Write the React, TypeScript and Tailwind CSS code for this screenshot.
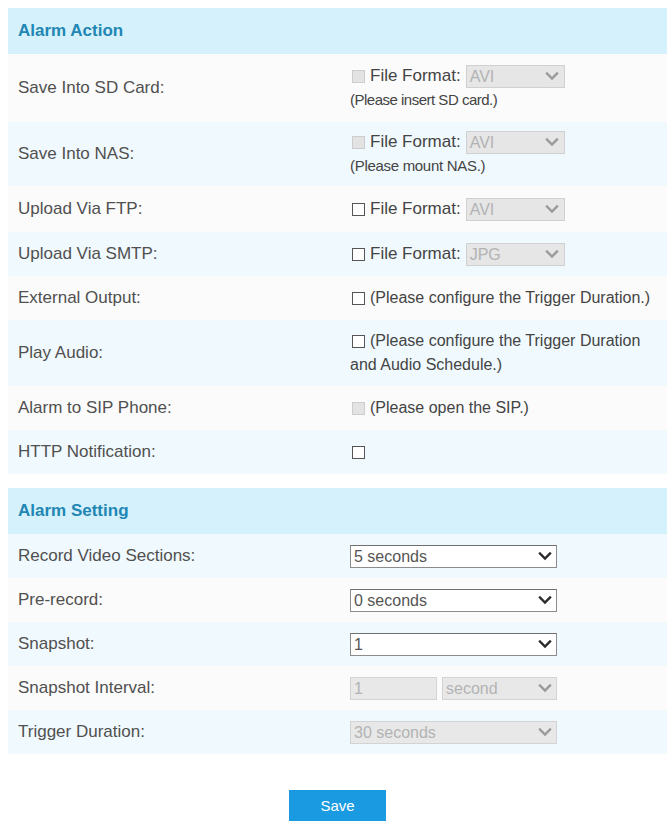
import React from 'react';

type Tone = 'white' | 'blue';

const rowTone: Record<Tone, string> = {
  white: 'bg-[#fbfbfb]',
  blue: 'bg-[#f0f9fd]',
};

function Chevron({ disabled = false }: { disabled?: boolean }) {
  return (
    <svg width="14" height="10" viewBox="0 0 14 10" className="shrink-0">
      <path
        d="M2 2.5 L7 7.5 L12 2.5"
        fill="none"
        stroke={disabled ? '#9a9a9a' : '#2b2b2b'}
        strokeWidth="2.4"
        strokeLinecap="square"
      />
    </svg>
  );
}

function Checkbox({ disabled = false }: { disabled?: boolean }) {
  return (
    <span
      className={
        disabled
          ? 'inline-block shrink-0 w-[13px] h-[13px] border border-[#cdcdcd] bg-[#e3e3e3]'
          : 'inline-block shrink-0 w-[13px] h-[13px] border border-[#555] bg-white'
      }
    />
  );
}

// small grey disabled select used for the file formats
function FormatSelect({ value }: { value: string }) {
  return (
    <span className="inline-flex items-center justify-between w-[99px] h-[23px] pl-[3px] pr-[5px] border border-[#d0d0d0] bg-[#e6e6e6] text-[#b3b3b3] text-[16px] leading-[21px]">
      <span>{value}</span>
      <Chevron disabled />
    </span>
  );
}

function WideSelect({ value, disabled = false, width = 'w-[207px]' }: { value: string; disabled?: boolean; width?: string }) {
  return (
    <div
      className={
        `${width} h-[23px] flex items-center justify-between pl-[3px] pr-[4px] border leading-[21px] ` +
        (disabled
          ? 'border-[#d3d3d3] bg-[#e8e8e8] text-[#b3b3b3]'
          : 'border-[#8c8c8c] border-t-[#6f6f6f] bg-white text-[#555]')
      }
    >
      <span>{value}</span>
      <Chevron disabled={disabled} />
    </div>
  );
}

function Row({ label, tone, pad = 'py-[10px]', children }: { label: string; tone: Tone; pad?: string; children: React.ReactNode }) {
  return (
    <div className={`flex items-center min-h-[44px] ${pad} ${rowTone[tone]}`}>
      <div className="w-[342px] shrink-0 pl-[10px] text-[#505050]">{label}</div>
      <div className="flex-1 text-[#444] text-[16px]">{children}</div>
    </div>
  );
}

function FileFormat({ value, disabled = false }: { value: string; disabled?: boolean }) {
  return (
    <div className="flex items-center gap-[5px] pl-[2px]">
      <Checkbox disabled={disabled} />
      <span className="text-[17px]">File Format:</span>
      <FormatSelect value={value} />
    </div>
  );
}

function Header({ title }: { title: string }) {
  return (
    <div className="h-[46px] flex items-center pl-[10px] bg-[#d5f1fb] font-bold text-[#2186b4]">{title}</div>
  );
}

export default function App() {
  return (
    <div className="min-h-[826px] bg-white px-[8px] pt-[8px] font-['Liberation_Sans',Arial,sans-serif] text-[17px] leading-[24px]">
      <div className="w-[659px]">
        <Header title="Alarm Action" />
        <Row label="Save Into SD Card:" tone="white" pad="py-[10px]">
          <FileFormat value="AVI" disabled />
          <div className="text-[15px] tracking-[-0.5px]">(Please insert SD card.)</div>
        </Row>
        <Row label="Save Into NAS:" tone="blue" pad="py-[8px]">
          <FileFormat value="AVI" disabled />
          <div className="text-[15px] tracking-[-0.3px]">(Please mount NAS.)</div>
        </Row>
        <Row label="Upload Via FTP:" tone="white" pad="py-[11px]">
          <FileFormat value="AVI" />
        </Row>
        <Row label="Upload Via SMTP:" tone="blue">
          <FileFormat value="JPG" />
        </Row>
        <Row label="External Output:" tone="white">
          <div className="flex items-center gap-[5px] pl-[2px] whitespace-nowrap">
            <Checkbox />
            <span>(Please configure the Trigger Duration.)</span>
          </div>
        </Row>
        <Row label="Play Audio:" tone="blue" pad="py-[9px]">
          <div className="flex items-center gap-[5px] pl-[2px] whitespace-nowrap">
            <Checkbox />
            <span>(Please configure the Trigger Duration</span>
          </div>
          <div>and Audio Schedule.)</div>
        </Row>
        <Row label="Alarm to SIP Phone:" tone="white">
          <div className="flex items-center gap-[5px] pl-[2px]">
            <Checkbox disabled />
            <span>(Please open the SIP.)</span>
          </div>
        </Row>
        <Row label="HTTP Notification:" tone="blue">
          <div className="flex items-center pl-[2px] h-[24px]">
            <Checkbox />
          </div>
        </Row>

        <div className="h-[14px]" />

        <Header title="Alarm Setting" />
        <Row label="Record Video Sections:" tone="blue">
          <WideSelect value="5 seconds" />
        </Row>
        <Row label="Pre-record:" tone="white">
          <WideSelect value="0 seconds" />
        </Row>
        <Row label="Snapshot:" tone="blue">
          <WideSelect value="1" />
        </Row>
        <Row label="Snapshot Interval:" tone="white">
          <div className="flex items-center gap-[5px]">
            <div className="w-[87px] h-[23px] pl-[3px] border border-[#d3d3d3] bg-[#e8e8e8] text-[#b3b3b3] leading-[21px]">1</div>
            <WideSelect value="second" disabled width="w-[115px]" />
          </div>
        </Row>
        <Row label="Trigger Duration:" tone="blue">
          <WideSelect value="30 seconds" disabled />
        </Row>
      </div>

      <div className="w-[659px] flex justify-center pt-[36px]">
        <button className="w-[97px] h-[31px] bg-[#1a9ae0] text-white text-[15px] leading-[31px]">Save</button>
      </div>
    </div>
  );
}
